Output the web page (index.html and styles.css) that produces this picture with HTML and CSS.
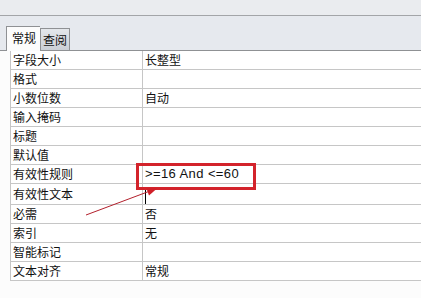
FILE: index.html
```html
<!DOCTYPE html>
<html lang="zh-CN">
<head>
	<meta charset="UTF-8">
	<title>字段属性</title>
	<link rel="stylesheet" href="styles.css">
</head>
<body>
	<div class="topbar"></div>
	<div class="tabs">
		<span class="tab current">常规</span>
		<span class="tab">查阅</span>
	</div>
	<div class="sheet">
		<table class="props">
			<tr><td class="name">字段大小</td><td>长整型</td></tr>
			<tr><td class="name">格式</td><td></td></tr>
			<tr><td class="name">小数位数</td><td>自动</td></tr>
			<tr><td class="name">输入掩码</td><td></td></tr>
			<tr><td class="name">标题</td><td></td></tr>
			<tr><td class="name">默认值</td><td></td></tr>
			<tr><td class="name">有效性规则</td><td class="rule">&gt;=16 And &lt;=60</td></tr>
			<tr><td class="name">有效性文本</td><td><span class="caret"></span></td></tr>
			<tr><td class="name">必需</td><td>否</td></tr>
			<tr><td class="name">索引</td><td>无</td></tr>
			<tr><td class="name">智能标记</td><td></td></tr>
			<tr><td class="name">文本对齐</td><td>常规</td></tr>
		</table>
		<!-- 标注: 红框和箭头 -->
		<div class="mark"></div>
		<svg class="arrow" width="421" height="248" viewBox="0 0 421 248">
			<line x1="86" y1="164" x2="150" y2="140" stroke="#b3202c" stroke-width="1"/>
			<polygon points="157,137.5 149,144.5 146.5,137.5" fill="#d01f28"/>
		</svg>
	</div>
</body>
</html>
```

FILE: styles.css
```css
body{
	margin: 0;
	background: #fcfcfc;
	font-family: "Noto Sans CJK SC", "Liberation Sans", sans-serif;
	font-size: 12px;
	color: #111;
	overflow: hidden;
}
.topbar{
	height: 15px;
	background: #eaecef;
	border-bottom: 1px solid #a3a5a8;
}
.tabs{
	display: flex;
	align-items: flex-end;
	height: 34px;
	padding-left: 6px;
	background: #e6e9ee;
	border-bottom: 1px solid #8f9194;
}
.tab{
	height: 21px;
	line-height: 21px;
	padding: 0 2px;
	border: 1px solid #8f9194;
	border-bottom: none;
	background: linear-gradient(#e4e7eb, #cbcfd5);
}
.tab.current{
	height: 24px;
	line-height: 22px;
	padding: 0 4px 0 5px;
	margin-bottom: -1px;
	background: #fcfcfc;
	border-right: none;
}
.sheet{
	position: relative;
	height: 248px;
	padding-left: 10px;
}
.props{
	width: 412px;
	border-collapse: collapse;
	background: #fff;
}
.props td{
	height: 18px;
	padding: 0 0 0 2px;
	line-height: 18px;
	border: 1px solid #c6c6c6;
	border-top: none;
	border-right: none;
	white-space: nowrap;
}
.props td.name{
	width: 129px;
}
.props td.rule{
	font-family: "Liberation Sans", sans-serif;
	font-size: 13px;
	letter-spacing: 0.4px;
}
.caret{
	display: inline-block;
	width: 1px;
	height: 14px;
	margin-top: 6px;
	background: #000;
	vertical-align: top;
}
.mark{
	position: absolute;
	left: 136px;
	top: 112px;
	width: 114px;
	height: 21px;
	border: 3px solid #d3232b;
}
.arrow{
	position: absolute;
	left: 0;
	top: 0;
	pointer-events: none;
}
```
